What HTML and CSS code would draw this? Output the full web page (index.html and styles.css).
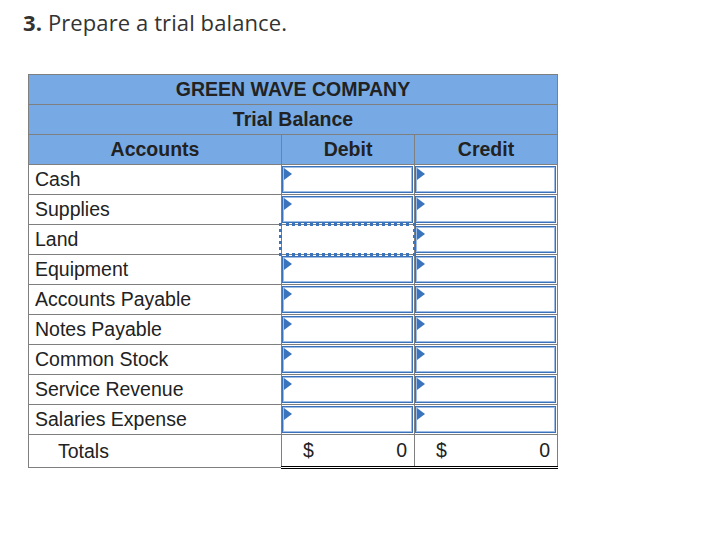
FILE: index.html
```html
<!DOCTYPE html>
<html>
<head>
<meta charset="utf-8">
<link rel="stylesheet" href="styles.css">
</head>
<body>
<div class="page">
  <h1 class="title"><b>3.</b> Prepare a trial balance.</h1>
  <table class="tb">
    <colgroup><col class="c-acc"><col class="c-deb"><col class="c-cre"></colgroup>
    <thead>
      <tr><th colspan="3" class="h-top">GREEN WAVE COMPANY</th></tr>
      <tr><th colspan="3">Trial Balance</th></tr>
      <tr><th>Accounts</th><th>Debit</th><th>Credit</th></tr>
    </thead>
    <tbody>
      <tr><td class="acc">Cash</td><td class="in"><div class="inp"><span class="flag"></span></div></td><td class="in"><div class="inp"><span class="flag"></span></div></td></tr>
      <tr><td class="acc">Supplies</td><td class="in"><div class="inp"><span class="flag"></span></div></td><td class="in"><div class="inp"><span class="flag"></span></div></td></tr>
      <tr><td class="acc">Land</td><td class="in"><div class="inp focus"><span class="flag"></span></div></td><td class="in"><div class="inp"><span class="flag"></span></div></td></tr>
      <tr><td class="acc">Equipment</td><td class="in"><div class="inp"><span class="flag"></span></div></td><td class="in"><div class="inp"><span class="flag"></span></div></td></tr>
      <tr><td class="acc">Accounts Payable</td><td class="in"><div class="inp"><span class="flag"></span></div></td><td class="in"><div class="inp"><span class="flag"></span></div></td></tr>
      <tr><td class="acc">Notes Payable</td><td class="in"><div class="inp"><span class="flag"></span></div></td><td class="in"><div class="inp"><span class="flag"></span></div></td></tr>
      <tr><td class="acc">Common Stock</td><td class="in"><div class="inp"><span class="flag"></span></div></td><td class="in"><div class="inp"><span class="flag"></span></div></td></tr>
      <tr><td class="acc">Service Revenue</td><td class="in"><div class="inp"><span class="flag"></span></div></td><td class="in"><div class="inp"><span class="flag"></span></div></td></tr>
      <tr><td class="acc">Salaries Expense</td><td class="in"><div class="inp"><span class="flag"></span></div></td><td class="in"><div class="inp"><span class="flag"></span></div></td></tr>
      <tr class="tot"><td class="acc tot-l">Totals</td><td class="sum"><span class="cur">$</span><span>0</span></td><td class="sum"><span class="cur">$</span><span>0</span></td></tr>
    </tbody>
  </table>
</div>
</body>
</html>
```
FILE: styles.css
```css
html, body { margin: 0; padding: 0; background: #fff; }
.page { padding: 7px 0 0 23px; }
.title {
  margin: 0;
  font-family: "Open Sans", "Lato", sans-serif;
  font-weight: 400;
  font-size: 22px;
  line-height: 30px;
  color: #333;
  letter-spacing: 0.1px;
}
.title b { font-weight: 700; }
.tb {
  margin: 37px 0 0 5px;
  border-collapse: collapse;
  table-layout: fixed;
  width: 529px;
  font-family: "Liberation Sans", Arial, sans-serif;
  font-size: 19.5px;
  color: #222;
}
.c-acc { width: 253px; }
.c-deb { width: 133px; }
.c-cre { width: 143px; }
.tb th {
  background: #77aae4;
  border: 1px solid #7f7f7f;
  height: 29px;
  padding: 0;
  font-weight: 700;
  color: #222;
  text-align: center;
}
.tb td {
  border: 1px solid #7f7f7f;
  height: 29px;
  padding: 0;
}
.tb td.acc { padding-left: 6px; }
.tb td.tot-l { padding-left: 29px; }
.inp {
  position: relative;
  height: 25px;
  margin: 0 1px 0 0;
  border: 1px solid #3b71b8;
  box-shadow: inset 0 0 0 1px #9dbde4;
  background: #fff;
}
.inp.focus {
  z-index: 2;
  border-color: transparent;
  box-shadow: none;
  outline: 3px dotted #3b74bd;
  outline-offset: 0px;
}
.flag {
  position: absolute;
  left: 1px;
  top: 1px;
  width: 0;
  height: 0;
  border-top: 6px solid transparent;
  border-bottom: 6px solid transparent;
  border-left: 8px solid #3b74bd;
}
.inp.focus .flag { display: none; }
.tot td { height: 31px; }
.tb td.sum {
  border-bottom: 3px double #000;
  padding: 0 7px 0 21px;
  text-align: right;
}
.tb td.sum .cur { float: left; }
```
